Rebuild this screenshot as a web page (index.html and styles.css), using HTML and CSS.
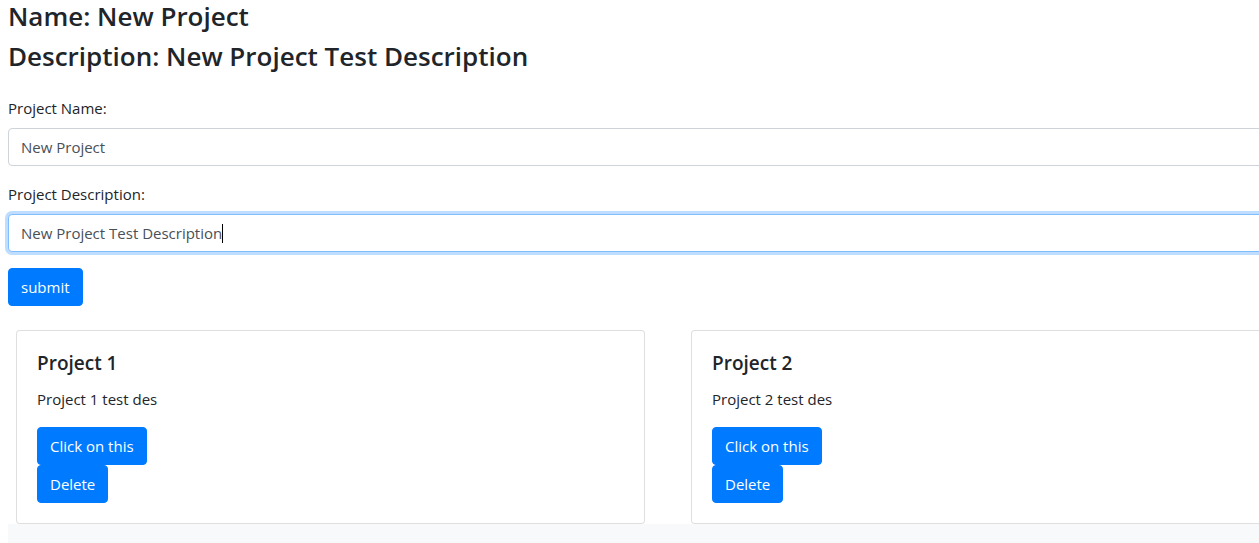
FILE: index.html
```html
<!DOCTYPE html>
<html>
<head>
<meta charset="utf-8">
<link rel="stylesheet" href="styles.css">
</head>
<body>
<div class="page">
  <h3 class="heading">Name: New Project</h3>
  <h3 class="heading">Description: New Project Test Description</h3>
  <form class="form">
    <div class="form-group">
      <label class="label">Project Name:</label>
      <input class="form-control" type="text" value="New Project">
    </div>
    <div class="form-group">
      <label class="label">Project Description:</label>
      <div class="form-control focused">New Project Test Description<span class="caret"></span></div>
    </div>
    <button type="button" class="btn">submit</button>
  </form>
  <div class="cards">
    <div class="card">
      <h5 class="card-title">Project 1</h5>
      <p class="card-text">Project 1 test des</p>
      <div class="actions">
        <button type="button" class="btn">Click on this</button>
        <button type="button" class="btn">Delete</button>
      </div>
    </div>
    <div class="card">
      <h5 class="card-title">Project 2</h5>
      <p class="card-text">Project 2 test des</p>
      <div class="actions">
        <button type="button" class="btn">Click on this</button>
        <button type="button" class="btn">Delete</button>
      </div>
    </div>
  </div>
  <div class="footer"></div>
</div>
</body>
</html>
```
FILE: styles.css
```css
html, body {
  margin: 0;
  padding: 0;
  overflow: hidden;
  background: #fff;
}
body {
  font-family: "Open Sans", "Noto Sans", sans-serif;
  font-size: 16px;
  line-height: 1.5;
  color: #212529;
}
.page {
  width: 1320px;
  padding: 0 0 0 8px;
}
.heading {
  margin: 0 0 8px 0;
  font-size: 26px;
  font-weight: 600;
  line-height: 32px;
}
.form {
  margin-top: 24px;
  width: 1300px;
}
.form-group {
  margin-bottom: 16px;
}
.label {
  display: block;
  margin-bottom: 8px;
  font-size: 15px;
  line-height: 24px;
}
.form-control {
  display: block;
  box-sizing: border-box;
  width: 100%;
  height: 38px;
  padding: 6px 12px;
  font-family: inherit;
  font-size: 15px;
  line-height: 24px;
  color: #495057;
  background: #fff;
  border: 1px solid #ced4da;
  border-radius: 4px;
  outline: none;
}
.focused {
  border-color: #80bdff;
  box-shadow: 0 0 0 3px rgba(0, 123, 255, 0.25);
}
.caret {
  display: inline-block;
  width: 1px;
  height: 19px;
  background: #000;
  vertical-align: -4px;
}
.btn {
  display: inline-block;
  box-sizing: border-box;
  height: 38px;
  padding: 6px 12px;
  font-family: inherit;
  font-size: 15px;
  line-height: 24px;
  color: #fff;
  background: #007bff;
  border: 1px solid #007bff;
  border-radius: 4px;
}
.cards {
  display: flex;
  gap: 46px;
  margin-top: 24px;
  padding-left: 8px;
}
.card {
  box-sizing: border-box;
  width: 629px;
  flex: none;
  padding: 20px;
  border: 1px solid rgba(0, 0, 0, 0.125);
  border-radius: 4px;
  background: #fff;
}
.card-title {
  margin: 0 0 12px 0;
  font-size: 19px;
  font-weight: 600;
  line-height: 24px;
}
.card-text {
  margin: 0 0 16px 0;
  font-size: 15px;
  line-height: 24px;
}
.actions {
  display: flex;
  flex-direction: column;
  align-items: flex-start;
}
.footer {
  height: 40px;
  background: #f8f9fa;
}
```
